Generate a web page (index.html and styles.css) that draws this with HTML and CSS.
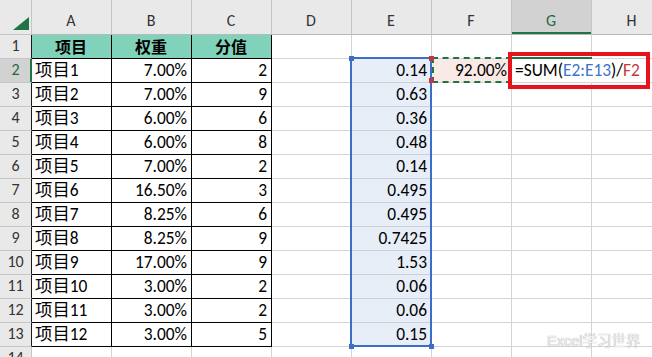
FILE: index.html
```html
<!DOCTYPE html>
<html lang="zh">
<head>
<meta charset="utf-8">
<link rel="stylesheet" href="styles.css">
</head>
<body>
<div class="sheet">
  <div class="c corner"><svg width="32" height="34" viewBox="0 0 32 34"><polygon points="29,17 29,30 13,30" fill="#217346"/></svg></div>
  <div class="c ch">A</div><div class="c ch">B</div><div class="c ch">C</div><div class="c ch">D</div><div class="c ch">E</div><div class="c ch">F</div><div class="c ch chsel">G</div><div class="c ch last">H</div>

  <div class="c rh tbl">1</div><div class="c t th">项目</div><div class="c t th">权重</div><div class="c t th">分值</div><div class="c"></div><div class="c"></div><div class="c"></div><div class="c"></div><div class="c last"></div>

  <div class="c rh rhsel">2</div><div class="c t">项目1</div><div class="c t num">7.00%</div><div class="c t num">2</div><div class="c"></div><div class="c sel num">0.14</div><div class="c ref num">92.00%</div><div class="c active"><span class="f">=SUM(<span class="fb">E2:E13</span>)/<span class="fr">F2</span></span></div><div class="c last"></div>

  <div class="c rh tbl">3</div><div class="c t">项目2</div><div class="c t num">7.00%</div><div class="c t num">9</div><div class="c"></div><div class="c sel num">0.63</div><div class="c"></div><div class="c"></div><div class="c last"></div>

  <div class="c rh tbl">4</div><div class="c t">项目3</div><div class="c t num">6.00%</div><div class="c t num">6</div><div class="c"></div><div class="c sel num">0.36</div><div class="c"></div><div class="c"></div><div class="c last"></div>

  <div class="c rh tbl">5</div><div class="c t">项目4</div><div class="c t num">6.00%</div><div class="c t num">8</div><div class="c"></div><div class="c sel num">0.48</div><div class="c"></div><div class="c"></div><div class="c last"></div>

  <div class="c rh tbl">6</div><div class="c t">项目5</div><div class="c t num">7.00%</div><div class="c t num">2</div><div class="c"></div><div class="c sel num">0.14</div><div class="c"></div><div class="c"></div><div class="c last"></div>

  <div class="c rh tbl">7</div><div class="c t">项目6</div><div class="c t num">16.50%</div><div class="c t num">3</div><div class="c"></div><div class="c sel num">0.495</div><div class="c"></div><div class="c"></div><div class="c last"></div>

  <div class="c rh tbl">8</div><div class="c t">项目7</div><div class="c t num">8.25%</div><div class="c t num">6</div><div class="c"></div><div class="c sel num">0.495</div><div class="c"></div><div class="c"></div><div class="c last"></div>

  <div class="c rh tbl">9</div><div class="c t">项目8</div><div class="c t num">8.25%</div><div class="c t num">9</div><div class="c"></div><div class="c sel num">0.7425</div><div class="c"></div><div class="c"></div><div class="c last"></div>

  <div class="c rh tbl">10</div><div class="c t">项目9</div><div class="c t num">17.00%</div><div class="c t num">9</div><div class="c"></div><div class="c sel num">1.53</div><div class="c"></div><div class="c"></div><div class="c last"></div>

  <div class="c rh tbl">11</div><div class="c t">项目10</div><div class="c t num">3.00%</div><div class="c t num">2</div><div class="c"></div><div class="c sel num">0.06</div><div class="c"></div><div class="c"></div><div class="c last"></div>

  <div class="c rh tbl">12</div><div class="c t">项目11</div><div class="c t num">3.00%</div><div class="c t num">2</div><div class="c"></div><div class="c sel num">0.06</div><div class="c"></div><div class="c"></div><div class="c last"></div>

  <div class="c rh tbl">13</div><div class="c t">项目12</div><div class="c t num">3.00%</div><div class="c t num">5</div><div class="c"></div><div class="c sel num">0.15</div><div class="c"></div><div class="c"></div><div class="c last"></div>

  <div class="c rh">14</div><div class="c"></div><div class="c"></div><div class="c"></div><div class="c"></div><div class="c"></div><div class="c"></div><div class="c"></div><div class="c last"></div>

  <div class="range-e"></div>
  <div class="hd hd-blue hd-tl"></div>
  <div class="hd hd-blue hd-bl"></div>
  <div class="hd hd-blue hd-br"></div>
  <div class="marquee"></div>
  <div class="hd hd-red hd-rt"></div>
  <div class="hd hd-red hd-rb"></div>
  <div class="active-top"></div>
  <div class="callout"></div>
  <div class="watermark">Excel学习世界</div>
</div>
</body>
</html>
```

FILE: styles.css
```css
* { box-sizing: border-box; }
html, body { margin: 0; padding: 0; }
body {
  width: 652px;
  height: 357px;
  overflow: hidden;
  background: #fff;
  font-family: Carlito, Calibri, "Liberation Sans", "Noto Sans CJK SC", sans-serif;
  font-size: 17.4px;
  color: #000;
}
.sheet {
  position: relative;
  display: grid;
  grid-template-columns: 32px repeat(7, 80px) 80px;
  grid-template-rows: 35px repeat(14, 24px);
}
.c {
  display: flex;
  align-items: flex-end;
  padding: 0 4px 2px 3px;
  line-height: 20px;
  white-space: nowrap;
  overflow: hidden;
  border-right: 1px solid #d4d4d4;
  border-bottom: 1px solid #d4d4d4;
}
.c.last { border-right: none; }
.num { justify-content: flex-end; }

.corner {
  background: #e9e9e9;
  border-right-color: #c6c6c6;
  border-bottom-color: #c6c6c6;
  padding: 0;
  display: block;
}
.corner svg { display: block; }
.ch {
  background: #e9e9e9;
  border-right-color: #c6c6c6;
  border-bottom-color: #b8b8b8;
  justify-content: center;
  color: #333;
  font-size: 16px;
  padding-bottom: 3px;
}
.chsel {
  background: #d2d2d2;
  color: #1d6b42;
  box-shadow: inset 0 -2px 0 #217346;
}
.rh {
  background: #e9e9e9;
  border-right-color: #c6c6c6;
  border-bottom-color: #c6c6c6;
  justify-content: center;
  align-items: center;
  color: #333;
  font-size: 16px;
  padding: 0 0 1px 0;
}
.rh.tbl { border-right-color: #1a1a1a; }
.rhsel {
  background: #d2d2d2;
  color: #1d6b42;
  border-right-color: #217346;
  box-shadow: inset -1px 0 0 #217346;
}
.t {
  border-right-color: #000;
  border-bottom-color: #000;
}
.th {
  background: #80d2bb;
  justify-content: center;
  font-weight: bold;
  font-family: "Noto Sans CJK SC", sans-serif;
  font-size: 16px;
}
.sel {
  background: #e8eef8;
  border-bottom-color: #c8cfda;
}
.ref { background: #f9e9e7; }
.active {
  overflow: visible;
  position: relative;
  z-index: 2;
  border-right-color: transparent;
  background: #fff;
}
.f { color: #000; }
.fb { color: #3a74cc; }
.fr { color: #c33a3a; }

.range-e {
  position: absolute;
  left: 350px;
  top: 57px;
  width: 82px;
  height: 290px;
  border: 2px solid #3b6ec6;
  z-index: 3;
}
.hd {
  position: absolute;
  width: 5px;
  height: 5px;
  z-index: 5;
}
.hd-blue { background: #3b6ec6; }
.hd-red { background: #c0393b; }
.hd-tl { left: 349px; top: 56px; }
.hd-bl { left: 349px; top: 344px; }
.hd-br { left: 429px; top: 344px; }
.hd-rt { left: 429px; top: 56px; }
.hd-rb { left: 429px; top: 78px; }
.marquee {
  position: absolute;
  left: 432px;
  top: 57px;
  width: 80px;
  height: 26px;
  border: 2px dashed #217346;
  z-index: 4;
}
.active-top {
  position: absolute;
  left: 512px;
  top: 57px;
  width: 80px;
  height: 2px;
  background: #217346;
  z-index: 4;
}
.callout {
  position: absolute;
  left: 508px;
  top: 52px;
  width: 142px;
  height: 37px;
  border: 4px solid #e5141b;
  z-index: 6;
}
.watermark {
  position: absolute;
  left: 547px;
  top: 333px;
  font-family: "Liberation Sans", "Noto Sans CJK SC", sans-serif;
  font-size: 14.5px;
  line-height: 16px;
  color: #eeeeee;
  text-shadow: 0 0 1px #8c8c8c;
  z-index: 7;
  white-space: nowrap;
}
```
